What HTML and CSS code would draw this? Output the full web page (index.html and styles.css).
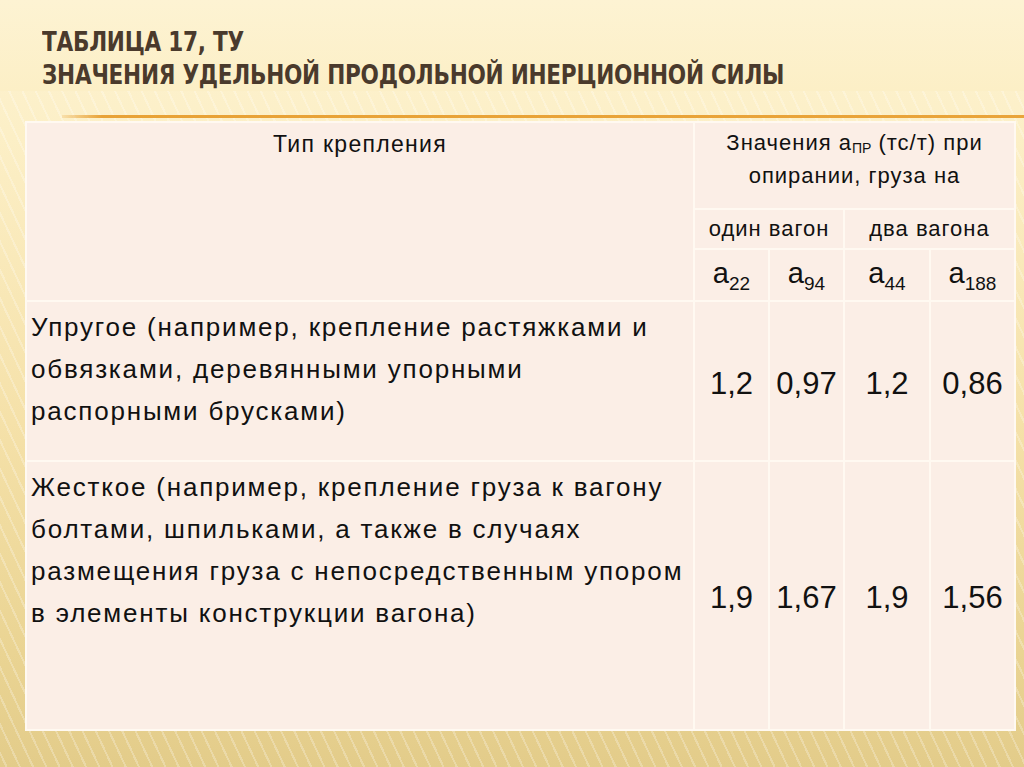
FILE: index.html
```html
<!DOCTYPE html>
<html lang="ru">
<head>
<meta charset="utf-8">
<title>Таблица 17, ТУ</title>
<link rel="stylesheet" href="styles.css">
</head>
<body>
<div class="slide">
  <header class="title">
    <h1>ТАБЛИЦА 17, ТУ<br>ЗНАЧЕНИЯ УДЕЛЬНОЙ ПРОДОЛЬНОЙ ИНЕРЦИОННОЙ СИЛЫ</h1>
  </header>
  <div class="rule"></div>
  <table class="grid">
    <colgroup>
      <col class="c-type">
      <col class="c-a">
      <col class="c-b">
      <col class="c-c">
      <col class="c-d">
    </colgroup>
    <tr class="r-h1">
      <td rowspan="3" class="head-type">Тип крепления</td>
      <td colspan="4" class="head-val">Значения а<sub class="sub-sm">ПР</sub> (тс/т) при<br>опирании, груза на</td>
    </tr>
    <tr class="r-h2">
      <td colspan="2" class="head-sub">один вагон</td>
      <td colspan="2" class="head-sub">два вагона</td>
    </tr>
    <tr class="r-h3">
      <td class="head-a">а<sub>22</sub></td>
      <td class="head-a">а<sub>94</sub></td>
      <td class="head-a">а<sub>44</sub></td>
      <td class="head-a">а<sub>188</sub></td>
    </tr>
    <tr class="r-1">
      <td class="desc">Упругое (например, крепление растяжками и обвязками, деревянными упорными распорными брусками)</td>
      <td class="num">1,2</td>
      <td class="num">0,97</td>
      <td class="num">1,2</td>
      <td class="num">0,86</td>
    </tr>
    <tr class="r-2">
      <td class="desc">Жесткое (например, крепление груза к вагону болтами, шпильками, а также в случаях размещения груза с непосредственным упором в элементы конструкции вагона)</td>
      <td class="num">1,9</td>
      <td class="num">1,67</td>
      <td class="num">1,9</td>
      <td class="num">1,56</td>
    </tr>
  </table>
</div>
</body>
</html>
```

FILE: styles.css
```css
html, body {
  margin: 0;
  padding: 0;
}
body {
  width: 1024px;
  height: 767px;
  overflow: hidden;
  background:
    repeating-linear-gradient(65deg, rgba(255,255,255,0) 0 5px, rgba(255,255,255,0.25) 5px 7px, rgba(255,255,255,0) 7px 12px),
    linear-gradient(to bottom, #fdf3d3 0%, #fcefc6 18%, #f5e1a9 55%, #ead493 85%, #e3cc8a 100%);
  font-family: "Liberation Sans", Arial, sans-serif;
}
.slide {
  display: flex;
  flex-direction: column;
  width: 1024px;
  height: 767px;
}
.title {
  padding: 25px 0 0 42px;
  height: 91px;
  box-sizing: border-box;
  background: linear-gradient(to bottom, #fdf3d3, #fcefc6);
}
.title h1 {
  margin: 0;
  font-family: "DejaVu Sans Condensed", "DejaVu Sans", sans-serif;
  font-stretch: condensed;
  font-weight: bold;
  font-size: 27px;
  line-height: 33px;
  color: #4a3a2c;
  letter-spacing: -0.3px;
  transform: scaleX(0.89);
  transform-origin: left top;
  white-space: nowrap;
}
.rule {
  margin: 24px 0 0 62px;
  height: 3px;
  background: linear-gradient(to right, rgba(232,160,52,0.2), #e8a236 40px, #e9a43a);
}
.grid {
  margin: 3px 0 0 25px;
  width: 989px;
  table-layout: fixed;
  border-collapse: separate;
  border-spacing: 2px;
  background: #fff9f1;
  color: #111;
}
.c-type { width: 666px; }
.c-a { width: 73px; }
.c-b { width: 73px; }
.c-c { width: 84px; }
.c-d { width: 83px; }
.grid td {
  background: #fbeee6;
  padding: 0;
  vertical-align: top;
}
.r-h1 { height: 85px; }
.r-h2 { height: 38px; }
.r-h3 { height: 50px; }
.r-1 { height: 158px; }
.r-2 { height: 267px; }
.head-type {
  text-align: center;
  font-size: 23px;
  letter-spacing: 1.3px;
  padding-top: 8px !important;
}
.head-val {
  text-align: center;
  font-size: 22px;
  line-height: 33px;
  letter-spacing: 1px;
  padding-top: 3px !important;
}
.head-val .sub-sm {
  font-size: 14px;
  line-height: 0;
  vertical-align: -3px;
  letter-spacing: 0;
}
.head-sub {
  text-align: center;
  font-size: 22px;
  letter-spacing: 1px;
  vertical-align: middle !important;
}
.head-a {
  text-align: center;
  font-size: 29px;
  vertical-align: middle !important;
  padding-bottom: 4px !important;
}
.head-a sub {
  font-size: 19px;
  line-height: 0;
  vertical-align: -7px;
}
.desc {
  font-size: 26px;
  line-height: 42px;
  letter-spacing: 1.8px;
  padding: 4px 8px 0 4px !important;
}
.num {
  text-align: center;
  font-size: 31px;
  vertical-align: middle !important;
  padding-top: 5px !important;
}
```
